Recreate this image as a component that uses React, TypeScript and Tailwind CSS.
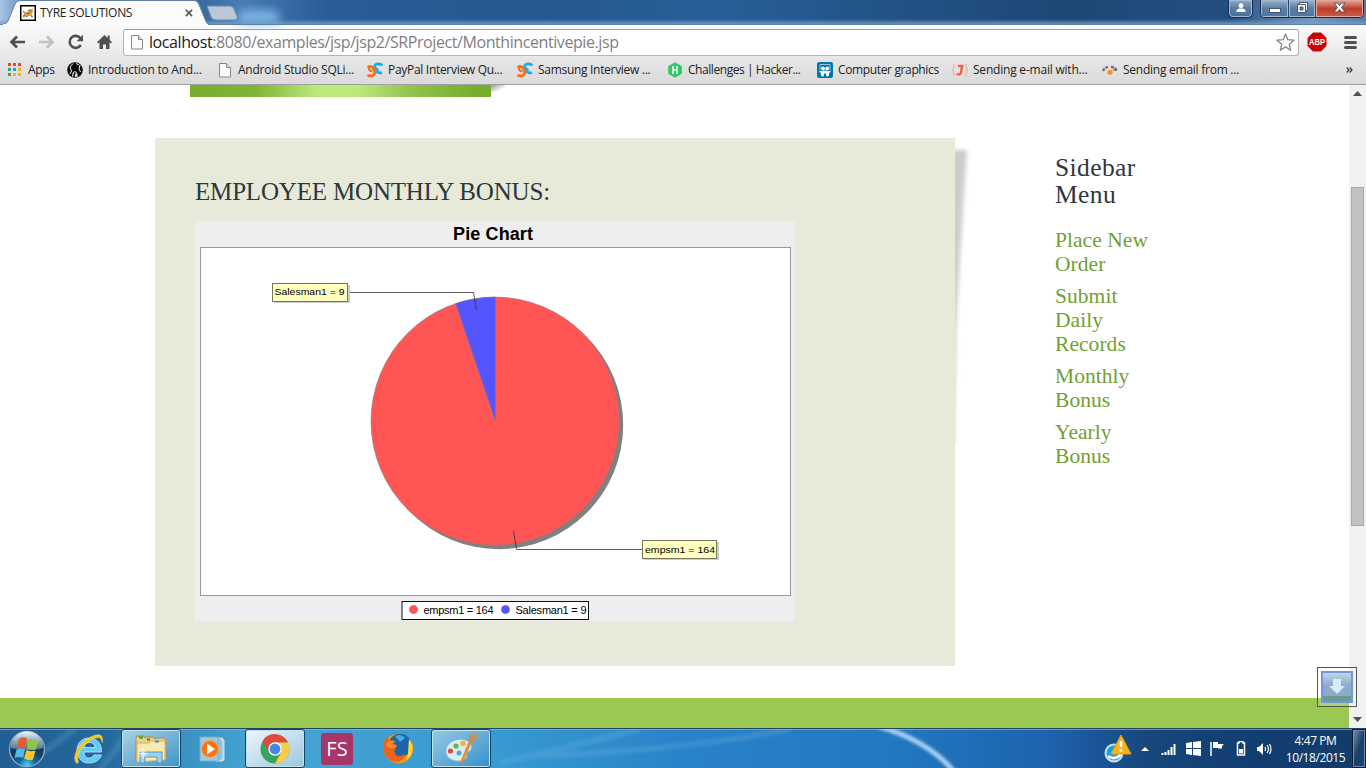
import React from 'react';

const ui = "font-['Open_Sans','Noto_Sans',sans-serif]";
const georgia = "font-['Liberation_Serif',serif]";

function PageIcon() {
  return (
    <svg width="16" height="16" viewBox="0 0 16 16">
      <path d="M2.500 1.500h7l4 4v9.500h-11z" fill="#fafafa" stroke="#888" />
      <path d="M9.500 1.500v4h4" fill="#ddd" stroke="#888" />
    </svg>
  );
}

function SanfoundryIcon() {
  return (
    <svg width="16" height="16" viewBox="0 0 16 16" fill="none" strokeWidth="2.800">
      <path d="M15.500 1.800Q14.500 3 12.500 2.200C9.500 1.200 6.800 3.200 8 5.500c1 1.800 2.600 1.800 2.800 3.300" stroke="#0fb0ee" />
      <path d="M9.500 8.500q1.500 3.400 5.500 2" stroke="#0fb0ee" />
      <path d="M.6 5.500Q4.500 3.300 6 6c1.200 2.400 2.400 2.600 1.800 5-.6 2.500-3 3.500-4.600 2.800Q1.800 13.200.5 14.300" stroke="#ff6a10" />
      <path d="M1.800 6.200Q2.200 9.500 5.500 9.200" stroke="#ff6a10" strokeWidth="2" />
    </svg>
  );
}

function Tomcat() {
  return (
    <svg width="16" height="16" viewBox="0 0 16 16">
      <rect x=".75" y=".75" width="14.500" height="14.500" fill="#fff" stroke="#000" strokeWidth="1.500" />
      <path d="M2 12.500l2.500-3L3 7l4 0 2-3.500 1.500 1 2-1 .5 4-1.500 1.500 1.500 2.500-3-.5-3 0-3 1.500z" fill="#d2a44c" />
      <path d="M3 11l2-1.500M9.500 5.500l2 .5M6 12l2-1M11 11.500l2 .5M3 6l1.500 1" stroke="#6a5632" strokeWidth=".9" />
      <path d="M7 8.500h3" stroke="#8c6c35" />
    </svg>
  );
}

const bookmarks = [
  {
    label: 'Introduction to And...',
    width: 'w-[150px]',
    spacing: 'tracking-[-0.24px]',
    icon: (
      <svg width="16" height="16" viewBox="0 0 16 16">
        <circle cx="8" cy="8" r="7.800" fill="#0a0a0a" />
        <path d="M6 1.500L3 5l1.500 4L3 12M13 3l-1 4 1.500 3M9 1.500l3 1.500" stroke="#eee" strokeWidth="1" fill="none" />
        <path d="M5 14.500c0-3 1-5 3-5.500 2 1 3 3 2.500 6z" fill="#ddd" />
        <path d="M7 15c0-3 .5-4 1.500-4.500" stroke="#111" strokeWidth="1.500" />
      </svg>
    ),
  },
  { label: 'Android Studio SQLi...', width: 'w-[150px]', spacing: 'tracking-[-0.25px]', icon: <PageIcon /> },
  { label: 'PayPal Interview Qu...', width: 'w-[150px]', spacing: 'tracking-[-0.3px]', icon: <SanfoundryIcon /> },
  { label: 'Samsung Interview ...', width: 'w-[150px]', spacing: 'tracking-[-0.3px]', icon: <SanfoundryIcon /> },
  {
    label: 'Challenges | Hacker...',
    width: 'w-[150px]',
    spacing: 'tracking-[-0.44px]',
    icon: (
      <svg width="16" height="16" viewBox="0 0 16 16">
        <path d="M8 .3l6.800 4v7.500L8 15.700l-6.800-3.900V4.300z" fill="#2ec866" />
        <path d="M6 4v8M10 4v8M6 8h4" stroke="#fff" strokeWidth="1.500" />
      </svg>
    ),
  },
  {
    label: 'Computer graphics',
    width: 'w-[135px]',
    spacing: 'tracking-[-0.36px]',
    icon: (
      <svg width="16" height="16" viewBox="0 0 16 16">
        <rect width="16" height="16" rx="2" fill="#0077b5" />
        <path d="M3 7.500v-5h10v5" fill="none" stroke="#b8dcec" strokeWidth=".8" />
        <circle cx="6" cy="6.500" r="1.900" fill="#fff" />
        <circle cx="10.200" cy="6.500" r="1.900" fill="#fff" />
        <path d="M2 8.500q3 1.500 6 0 3 1.500 6 0-.5 2-2 2.500c.3 2 0 3.500-1.500 3.500-1 0-1.500-.5-1.500-3h-2c0 2.500-.5 3-1.500 3-1.500 0-1.800-1.500-1.500-3.500Q2.500 10.500 2 8.500z" fill="#fff" />
      </svg>
    ),
  },
  {
    label: 'Sending e-mail with...',
    width: 'w-[150px]',
    spacing: 'tracking-[-0.21px]',
    icon: (
      <svg width="16" height="16" viewBox="0 0 16 16" fill="none">
        <path d="M3 2.500c-2 0-1 4-2.200 5.500C2 9.500 1 13.500 3 13.500M13 2.500c2 0 1 4 2.200 5.500-1.200 1.500-.2 5.500-2.200 5.500" stroke="#f6b09c" strokeWidth="1.300" />
        <path d="M6 4h5.500M10 4l-1 6.500c-.3 2-2 2.300-4.500 1.500" stroke="#f0623d" strokeWidth="2.300" />
      </svg>
    ),
  },
  {
    label: 'Sending email from ...',
    width: 'w-[150px]',
    spacing: 'tracking-[-0.25px]',
    icon: (
      <svg width="16" height="16" viewBox="0 0 16 16" fill="none">
        <path d="M1 9c1-2.500 3-4 5-4M9 4.800c3 .2 5 2 6 4.500" stroke="#666" strokeWidth="2.200" strokeDasharray="3 1" />
        <path d="M11 7.500l3 1" stroke="#777" strokeWidth="1.500" />
        <ellipse cx="8" cy="10.300" rx="2.700" ry="2.300" fill="#ff8b0f" />
      </svg>
    ),
  },
];

function Caption() {
  return (
    <div className="absolute right-[2px] top-0 flex gap-[7px]">
      <div className="flex h-[18px] w-[25px] items-center justify-center rounded-b-[5px] border border-t-0 border-[#132d4e] bg-linear-to-b from-[#91a9c4] via-[#587ba2] to-[#456d9b] pb-[2px] shadow-[inset_0_0_0_1px_#a4bad2]">
        <svg width="10" height="10" viewBox="0 0 10 10" fill="#fff"><circle cx="5" cy="2.700" r="2.400" /><path d="M.5 9V7.500C1 6 3 5.500 5 5.500s4 .5 4.500 2V9z" /></svg>
      </div>
      <div className="flex h-[18px] overflow-hidden rounded-b-[5px] border border-t-0 border-[#132d4e]">
        <div className="flex w-7 items-end justify-center border-r border-[#284a70] bg-linear-to-b from-[#a2b5ca] via-[#587da5] to-[#4d76a3] pb-[4px] shadow-[inset_0_0_0_1px_#a4bad2]">
          <span className="h-[5px] w-[12px] border border-[#46566c] bg-white" />
        </div>
        <div className="flex w-[27px] items-center justify-center border-r border-[#284a70] bg-linear-to-b from-[#a2b5ca] via-[#587da5] to-[#4d76a3] pb-[2px] shadow-[inset_0_0_0_1px_#a4bad2]">
          <svg width="13" height="13" viewBox="0 0 13 13">
            <path d="M3.500 1.500h8v8h-8z" fill="#fff" stroke="#46566c" />
            <path d="M1.500 3.500h8v8h-8z" fill="#fff" stroke="#46566c" />
            <path d="M4 6h3v3H4z" fill="#587da5" stroke="#46566c" />
          </svg>
        </div>
        <div className="flex w-[47px] items-center justify-center bg-linear-to-b from-[#dcaaa0] via-[#bd3d28] to-[#c95d42] pb-[2px] shadow-[inset_0_0_0_1px_#e5a79b]">
          <svg width="13" height="11" viewBox="0 0 13 11"><path d="M1 1h3.500l2 2.500L8.500 1H12L8.500 5.500 12 10H8.500l-2-2.500-2 2.500H1l3.500-4.500z" fill="#fff" stroke="#58505a" /></svg>
        </div>
      </div>
    </div>
  );
}

function Browser() {
  return (
    <header className="flex h-[85px] shrink-0 flex-col">
      <div className="relative flex h-[25px] bg-[linear-gradient(90deg,#a9c5e2_0,#7fa5cd_1%,#3c6ba4_15%,#4b7db3_17.5%,#3c6fa9_20%,#2a5d98_24%,#25588f_40%,#285f98_52%,#1d4775_78%,#234f80_90%,#7797b9_96%,#527ba7_100%)]">
        <div className="absolute left-[238px] top-[10px] h-[15px] w-[42px] rounded-full bg-[#86c3f0]/80 blur-[5px]" />
        <div className="absolute inset-x-0 bottom-0 h-[6px] bg-linear-to-b from-transparent to-[#769dca]" />
        <svg className="absolute left-0 top-0" width="250" height="25" viewBox="0 0 250 25">
          <path d="M207 6h23q3 0 4 3l3 7q1 4-3 4h-18q-4 0-5-3z" fill="#b9c7d8" stroke="#6b89ac" />
          <path d="M0 25q6 0 8-4l7-17q2-4 5-3.500h174q4 0 5 4l7 17q1 3.500 5 3.500z" fill="#fbfbfb" stroke="#607e9f" />
          <path d="M3 25h205" stroke="#fbfbfb" strokeWidth="2" />
        </svg>
        <div className="relative flex w-[200px] items-center pl-5 text-xs text-[#222]">
          <Tomcat />
          <span className="ml-1 w-[145px] tracking-[-0.3px]">TYRE SOLUTIONS</span>
          <svg width="8" height="8" viewBox="0 0 9 9"><path d="M1 1l7 7M8 1L1 8" stroke="#555" strokeWidth="1.800" /></svg>
        </div>
        <div className="absolute bottom-0 left-[208px] right-0 h-px bg-[#5f7fa4]" />
        <Caption />
      </div>
      <div className="flex h-[34px] items-center bg-linear-to-b from-[#fafafa] to-[#e7e7e7]">
        <div className="flex w-[123px] items-center pl-[9px]">
          <svg width="17" height="16" viewBox="0 0 17 16" fill="none"><path d="M16 8H3M8 2.500L2.500 8 8 13.500" stroke="#505050" strokeWidth="2.700" /></svg>
          <svg className="ml-3" width="17" height="16" viewBox="0 0 17 16" fill="none"><path d="M1 8h13M9 2.500L14.500 8 9 13.500" stroke="#c2c2c2" strokeWidth="2.700" /></svg>
          <svg className="ml-[13px]" width="16" height="16" viewBox="0 0 16 16" fill="none"><path d="M12.800 11A6 6 0 1 1 12.300 4" stroke="#505050" strokeWidth="2.600" /><path d="M15 .8v6.500H8.600z" fill="#505050" /></svg>
          <svg className="ml-[13px]" width="15" height="16" viewBox="0 0 15 16"><path d="M7.500 1L0 8.300l1.200 1.200L2.500 8.300V15H6v-4.500h3V15h3.500V8.300l1.300 1.200L15 8.300l-2.300-2.200V1.500h-2v2.600z" fill="#505050" /></svg>
        </div>
        <div className="flex h-[27px] w-[1176px] items-center rounded-[3px] border border-[#b5b5b5] border-t-[#9d9d9d] bg-white pl-[5px] pr-[3px]">
          <PageIcon />
          <span className="ml-1 grow whitespace-pre text-base leading-6 tracking-[-0.42px] text-[#808080]"><span className="text-[#1a1a1a]">localhost</span>:8080/examples/jsp/jsp2/SRProject/Monthincentivepie.jsp</span>
          <svg width="19" height="18" viewBox="0 0 19 18"><path d="M9.500 1l2.300 5.700 6.200.5-4.800 4 1.500 6-5.200-3.300-5.200 3.300 1.500-6L1 7.200l6.200-.5z" fill="#fff" stroke="#858585" strokeWidth="1.300" strokeLinejoin="round" /></svg>
        </div>
        <svg className="ml-[8px] overflow-visible" width="20" height="20" viewBox="0 0 20 20">
          <path d="M6 .5h8L19.500 6v8L14 19.500H6L.5 14V6z" fill="#c90606" />
          <text x="2" y="13.300" fontSize="9" fontWeight="bold" fill="#fff" textLength="16" lengthAdjust="spacingAndGlyphs" fontFamily="Liberation Sans, sans-serif">ABP</text>
        </svg>
        <div className="ml-[17px] flex w-[13px] flex-col gap-[2px]">
          <span className="h-[3px] rounded-sm bg-[#505050]" /><span className="h-[3px] rounded-sm bg-[#505050]" /><span className="h-[3px] rounded-sm bg-[#505050]" />
        </div>
      </div>
      <div className="flex h-[26px] items-center border-b border-[#a0a0a0] bg-linear-to-b from-[#e5e5e5] to-[#dbdbdb] pb-1 pl-2 text-xs text-[#222]">
        <div className="flex w-[59px] items-center gap-[7px]">
          <svg width="13" height="13" viewBox="0 0 13 13">
            {['#ef4236', '#ef4236', '#ef4236', '#34a65c', '#3b8df0', '#f3b60e', '#34a65c', '#f3b60e', '#f3b60e'].map((c, i) => (
              <rect key={i} x={(i % 3) * 5} y={Math.floor(i / 3) * 5} width="3" height="3" fill={c} />
            ))}
          </svg>
          <span className="tracking-[-0.3px]">Apps</span>
        </div>
        {bookmarks.map((b) => (
          <div key={b.label} className={`flex shrink-0 items-center gap-[5px] whitespace-pre ${b.width} ${b.spacing}`}>
            {b.icon}
            <span>{b.label}</span>
          </div>
        ))}
        <svg className="ml-auto mr-[13px]" width="7" height="6" viewBox="0 0 7 6"><path d="M.7.500L3 3 .7 5.500M3.700.500L6 3 3.700 5.500" fill="none" stroke="#333" strokeWidth="1.200" /></svg>
      </div>
    </header>
  );
}

function PieChart() {
  return (
    <svg className="block" width="600" height="400" viewBox="195 221 600 400" fontFamily="Liberation Sans, Arial, sans-serif">
      <rect x="195" y="221" width="600" height="400" fill="#eeeeee" />
      <text x="453" y="240" fontSize="18" fontWeight="bold" textLength="80">Pie Chart</text>
      <rect x="200.500" y="247.500" width="590" height="348" fill="#fff" stroke="#999" />
      <circle cx="498.900" cy="424.900" r="124.300" fill="#808080" />
      <circle cx="495.200" cy="421.300" r="124.200" fill="#ff5555" stroke="#808080" strokeWidth=".6" />
      <path d="M495.500 421.500L455.600 303.600A124.500 124.500 0 0 1 495.500 297z" fill="#5555ff" stroke="#808080" strokeWidth=".5" />
      <path d="M349 292.500H473.500L476.500 310.500" fill="none" stroke="#333" strokeWidth=".8" />
      <path d="M642 549.500H516.500L513.500 531" fill="none" stroke="#333" strokeWidth=".8" />
      <rect x="274" y="285" width="76" height="18" fill="#ccc" />
      <rect x="272.500" y="283.500" width="75" height="18" fill="#ffffc0" stroke="#777760" />
      <text x="274.500" y="295" fontSize="9.500" textLength="70" lengthAdjust="spacingAndGlyphs">Salesman1 = 9</text>
      <rect x="644" y="542" width="75" height="18" fill="#ccc" />
      <rect x="642.500" y="540.500" width="74" height="18" fill="#ffffc0" stroke="#777760" />
      <text x="645" y="553" fontSize="9.500" textLength="70" lengthAdjust="spacingAndGlyphs">empsm1 = 164</text>
      <rect x="402" y="601.500" width="186.500" height="18" fill="#fff" stroke="#111" />
      <circle cx="413.500" cy="609.500" r="4.300" fill="#ff5555" stroke="#999" strokeWidth=".5" />
      <text x="423.500" y="614" fontSize="11" textLength="70">empsm1 = 164</text>
      <circle cx="505.500" cy="609.500" r="4.300" fill="#5555ff" stroke="#999" strokeWidth=".5" />
      <text x="515.500" y="614" fontSize="11" textLength="71">Salesman1 = 9</text>
    </svg>
  );
}

const links = [['Place New', 'Order'], ['Submit', 'Daily', 'Records'], ['Monthly', 'Bonus'], ['Yearly', 'Bonus']];

function Page() {
  return (
    <div className="relative flex h-[643px] shrink-0">
      <main className="flex w-[1349px] flex-col bg-white">
        <div className="ml-[190px] flex h-[53px] items-start">
          <div className="h-3 w-[301px] bg-[linear-gradient(90deg,#77ad2c_0,#80b435_22%,#bde87d_42%,#bde87d_56%,#8fc04a_75%,#77ad2c_95%)]" />
          <div className="h-[7px] w-3.5 bg-linear-to-br from-[#999] to-70% to-white" />
        </div>
        <div className={`flex h-[560px] ${georgia}`}>
          <section className="relative ml-[155px] h-[528px] w-[800px] bg-[#e7ead8] pl-10 pt-10">
            <h1 className="h-[43px] whitespace-pre text-[25px] leading-7 tracking-[-0.18px] text-[#2e373d]">EMPLOYEE MONTHLY BONUS:</h1>
            <PieChart />
            <svg className="absolute left-[800px] top-0" width="24" height="320" viewBox="0 0 24 320">
              <defs><filter id="soft" x="-1" width="3"><feGaussianBlur stdDeviation="2" /></filter></defs>
              <path d="M-5 12L12 12Q6 100 1 190L-1 306H-5z" fill="#cdcdcd" filter="url(#soft)" />
            </svg>
          </section>
          <aside className="ml-[100px] pt-4">
            <h2 className="text-[25.5px] leading-[27px] tracking-[0.4px] text-[#2e373d]">Sidebar<br />Menu</h2>
            <ul className="mt-5 flex flex-col gap-2 text-[21.5px] leading-6 tracking-[0.05px] text-[#719f35]">
              {links.map((words) => (
                <li key={words[0]}>{words.map((w) => <div key={w}>{w}</div>)}</li>
              ))}
            </ul>
          </aside>
        </div>
        <footer className="h-[30px] bg-[#9bc853]" />
      </main>
      <div className="flex w-[17px] flex-col items-center bg-[#f1f1f1]">
        <svg width="17" height="17" viewBox="0 0 17 17"><path d="M4 11l4.500-5 4.500 5z" fill="#505050" /></svg>
        <div className="mt-[85px] h-[339px] w-[13px] border border-[#a8a8a8] bg-[#c1c1c1]" />
        <svg className="mt-auto" width="17" height="17" viewBox="0 0 17 17"><path d="M4 6l4.500 5L13 6z" fill="#505050" /></svg>
      </div>
      <div className="absolute left-[1317px] top-[582px] h-10 w-10 border border-[#555] bg-white/15 p-[3px]">
        <div className="flex h-8 w-8 items-center justify-center border-2 border-[#7199d5] bg-[linear-gradient(180deg,#c3d5e9_0,#8babcb_45%,#8babcb_82%,#679b91_84%,#679b91_100%)]">
          <svg width="18" height="18" viewBox="0 0 18 18"><path d="M5 1h8v7h4l-8 8-8-8h4z" fill="#dceaf6" /></svg>
        </div>
      </div>
    </div>
  );
}

function Taskbar() {
  const active = 'flex h-[39px] w-[60px] shrink-0 items-center justify-center rounded-[3px] border border-[#17445f] shadow-[inset_0_0_0_1px_#c4e2f0]';
  return (
    <footer className={`relative flex h-10 shrink-0 overflow-hidden border-t border-[#234560] bg-[linear-gradient(90deg,#215e93_0,#24699e_8%,#368dbc_12%,#46a5d4_19%,#409fd1_28%,#389bd1_36%,#2a82c8_50%,#2279c1_65%,#1d62ad_77%,#17477c_84%,#123d70_92%,#123c68_100%)] ${ui} text-white`}>
      <svg className="absolute left-0 top-0" width="1366" height="39" viewBox="0 0 1366 39">
        <defs><filter id="haze"><feGaussianBlur stdDeviation="1.500" /></filter></defs>
        <path d="M0 .5h1366" stroke="#8dbcd0" strokeOpacity=".65" />
        <g fill="none" filter="url(#haze)">
          <path d="M500 34Q560 20 640 0M530 27Q680 22 790 0" stroke="#73b8e2" strokeOpacity=".25" strokeWidth="6" />
          <path d="M878-3Q930 12 956 45" stroke="#a8cff3" strokeWidth="5" />
          <path d="M20 40L75 0M100 40L128 5" stroke="#66acc8" strokeOpacity=".25" strokeWidth="7" />
        </g>
      </svg>
      <div className="relative flex items-center">
        <svg className="ml-2" width="38" height="38" viewBox="0 0 38 38">
          <defs><radialGradient id="orb" cy=".95"><stop stopColor="#37d5ff" /><stop offset=".45" stopColor="#14699f" /><stop offset="1" stopColor="#153d61" /></radialGradient><linearGradient id="gloss" y2="1" x2="0"><stop stopColor="#eef5f8" /><stop offset="1" stopColor="#7891a6" stopOpacity=".65" /></linearGradient></defs>
          <circle cx="19" cy="19" r="17.500" fill="url(#orb)" stroke="#8eabc0" strokeWidth="1.300" />
          <path d="M2.500 18A16.500 16.500 0 0 1 35.500 18Q19 22 2.500 18z" fill="url(#gloss)" />
          <path d="M11 9q4-3 8-.5L17.500 18q-4-2-8.500 0z" fill="#ed5a29" /><path d="M20.500 9q4.500 3 10 1l-2.500 9q-4 2-9-.5z" fill="#90c63f" /><path d="M8.500 19.500q4-2 8.500 0L15 28q-3-2-8.500 0z" fill="#55b9eb" /><path d="M18.500 20q4 2 9 .5L25 29.500q-4 2-9-1z" fill="#fbc62b" />
        </svg>
        <svg className="ml-[27px]" width="32" height="32" viewBox="0 0 32 32">
          <path d="M28.500 22C27 27 22 30 16 30 8 30 4 24 4 17.500 4 10 9 5 16 5c8 0 12.500 5.500 12.500 14H11c0 7.500 7.500 7.500 10 3zM11 14.500h11c0-6.500-10.500-7-11 0z" fill="#63c9f6" stroke="#c4edff" strokeWidth=".8" />
          <path d="M3 29.500C-2 22 9 6 22 2.200q9-2.500 7.200 7.300-.5-6.500-7-4.500C11 9 2 22 5.500 28.500 5 30.500 4 30.500 3 29.500z" fill="#f8c512" stroke="#ffe567" strokeWidth=".5" />
        </svg>
        <div className={`ml-[16px] bg-linear-to-br from-[#b8dcec]/90 to-[#3996ca]/80 ${active}`}>
          <svg width="32" height="32" viewBox="0 0 32 32">
            <path d="M1 28V5l1-2h7l1 2 2-1h6l2 2 2-1h7l2 2v20z" fill="#ead18a" stroke="#aa8949" />
            <path d="M2 29V10h12l2-2h14v19z" fill="#fae9ae" stroke="#d2b56c" />
            <path d="M4 4.500h4" stroke="#18a430" strokeWidth="2" /><path d="M12 6.500h3" stroke="#c34131" strokeWidth="2" /><path d="M20 8.500h4" stroke="#239be3" strokeWidth="2" />
            <path d="M5 30V19h22v11h-5v-6H10v6z" fill="#9fd0ed" stroke="#5297bf" /><path d="M8 15v11M3 20.500h10M5 17.500l6 6M11 17.500l-6 6" stroke="#fff" strokeWidth=".9" />
          </svg>
        </div>
        <svg className="ml-[17px]" width="30" height="30" viewBox="0 0 30 30">
          <path d="M18 4h6l1 1v22h-7M23 6h3v20h-3" fill="#8cc5e4" stroke="#d2e8f3" />
          <path d="M2 3h18v24H2z" fill="#9fc9e0" stroke="#76adca" /><circle cx="12" cy="15" r="8.500" fill="#f57415" stroke="#ffac5c" /><path d="M9 9.500v11l8-5.500z" fill="#fff" />
        </svg>
        <div className={`ml-[17px] bg-linear-to-br from-[#edf6fa] to-[#9dc7de] ${active}`}>
          <svg width="30" height="30" viewBox="0 0 30 30">
            <circle cx="15" cy="15" r="14.500" fill="#36a45c" /><path d="M2.500 7A14.500 14.500 0 0 1 28 8.500H15l-6.200 9z" fill="#df4b3f" /><path d="M15 8.500h13A14.500 14.500 0 0 1 15 29.500l6-11z" fill="#fccc46" /><circle cx="15" cy="15" r="6.700" fill="#fff" /><circle cx="15" cy="15" r="5.400" fill="#4387ed" />
          </svg>
        </div>
        <div className="ml-4 flex h-8 w-8 items-center justify-center rounded-[3px] bg-[#a7356a] text-[20px] font-medium">FS</div>
        <svg className="ml-[30px]" width="31" height="31" viewBox="0 0 31 31">
          <circle cx="15.500" cy="15.500" r="14.700" fill="#f59a1c" /><circle cx="17" cy="12.500" r="11.800" fill="#1b65a8" /><path d="M12 3q6-3 10 2l-5 4z" fill="#4babdc" /><path d="M26 6c5 5 5 17-3 21 3-6 2-12 3-21z" fill="#ffdb39" />
          <path d="M1 10L3 4l4 3 6 1-3 3 4 2-2 4c-2 6 5 8 10 4 1 4-4 8-9 8C6 28-2 22 1 10z" fill="#e7661c" /><path d="M3 13c1-5 4-6 8-5l-2 3 5 1-3 3H7z" fill="#f48a27" />
        </svg>
        <div className={`ml-[17px] bg-linear-to-br from-[#9fcfe7]/90 to-[#2f8ec9]/80 ${active}`}>
          <svg width="33" height="34" viewBox="0 0 33 34">
            <path d="M1 17C3 8 16 5 23 9q6 5 2 10-4 1-3 5c0 5-10 7-17 3Q0 24 1 17z" fill="#d9edf7" stroke="#8ab8d2" /><circle cx="5.500" cy="19" r="2.600" fill="#e04a3b" /><circle cx="11" cy="14" r="2.600" fill="#56b843" /><circle cx="18" cy="11.500" r="2.800" fill="#f7b32b" /><circle cx="14" cy="21" r="2.500" fill="#57a4cf" />
            <path d="M27 8L18 31l-2 1v-3l9-22z" fill="#f09132" stroke="#b9722c" strokeWidth=".5" /><path d="M24 7q-1-6 7-6 3 4-1 8l-2 3z" fill="#bd9462" />
          </svg>
        </div>
      </div>
      <div className="relative ml-auto flex items-center">
        <svg width="28" height="30" viewBox="0 0 28 30">
          <circle cx="10" cy="19" r="8.500" fill="#189ed9" stroke="#c7e5f2" strokeWidth="2" /><path d="M4 22q7 5 13-2M8 18h6" stroke="#fff" strokeWidth="2.500" fill="none" /><path d="M17 1L7 20h20z" fill="#f8b41c" stroke="#e79c12" strokeLinejoin="round" /><path d="M17 7v6M17 15.500v2" stroke="#fff" strokeWidth="2.500" />
        </svg>
        <svg className="ml-[9px]" width="8" height="5" viewBox="0 0 8 5"><path d="M0 5l4-4 4 4z" fill="#fff" /></svg>
        <svg className="ml-3" width="16" height="12" viewBox="0 0 16 12"><path d="M1.500 12v-2M4.500 12V9M7.500 12V7M10.500 12V4M13.500 12V1" stroke="#fff" strokeWidth="2" /></svg>
        <svg className="ml-[9px]" width="15" height="15" viewBox="0 0 15 15"><path d="M0 2l6-1v6H0zM7 1l8-1v7H7zM0 8h6v6l-6-1zM7 8h8v7l-8-1z" fill="#fff" /></svg>
        <svg className="ml-[9px]" width="16" height="15" viewBox="0 0 16 15"><path d="M1 1v14" stroke="#fff" strokeWidth="1.500" /><path d="M3 1h5v2h6l-2 2 0 2.500H8V7H3z" fill="#fff" /></svg>
        <svg className="ml-[10px]" width="10" height="15" viewBox="0 0 10 15"><path d="M3 2V.5h4V2h1.500v12h-7V2z" fill="none" stroke="#fff" strokeWidth="1.500" /><path d="M3 8h4v4.500H3z" fill="#fff" /></svg>
        <svg className="ml-[10px]" width="16" height="14" viewBox="0 0 16 14"><path d="M1 5h2l4-4v12L3 9H1z" fill="#fff" /><path d="M9 5q1 2 0 4M11 3q3 4 0 8M13.500 2q3 5 0 10" fill="none" stroke="#fff" strokeWidth="1.200" /></svg>
        <div className="ml-[11px] mr-1 w-[65px] whitespace-nowrap text-center text-xs leading-[17px] tracking-[-0.42px]"><div>4:47 PM</div><div>10/18/2015</div></div>
        <div className="h-[39px] w-3.5 border border-[#071b32] bg-linear-to-br from-[#7a91ab] via-[#1b4168] to-[#174573] shadow-[inset_0_0_0_1px_#6e8dab]" />
      </div>
    </footer>
  );
}

export default function App() {
  return (
    <div className={`flex h-[768px] w-[1366px] flex-col overflow-hidden bg-white ${ui}`}>
      <Browser />
      <Page />
      <Taskbar />
    </div>
  );
}
